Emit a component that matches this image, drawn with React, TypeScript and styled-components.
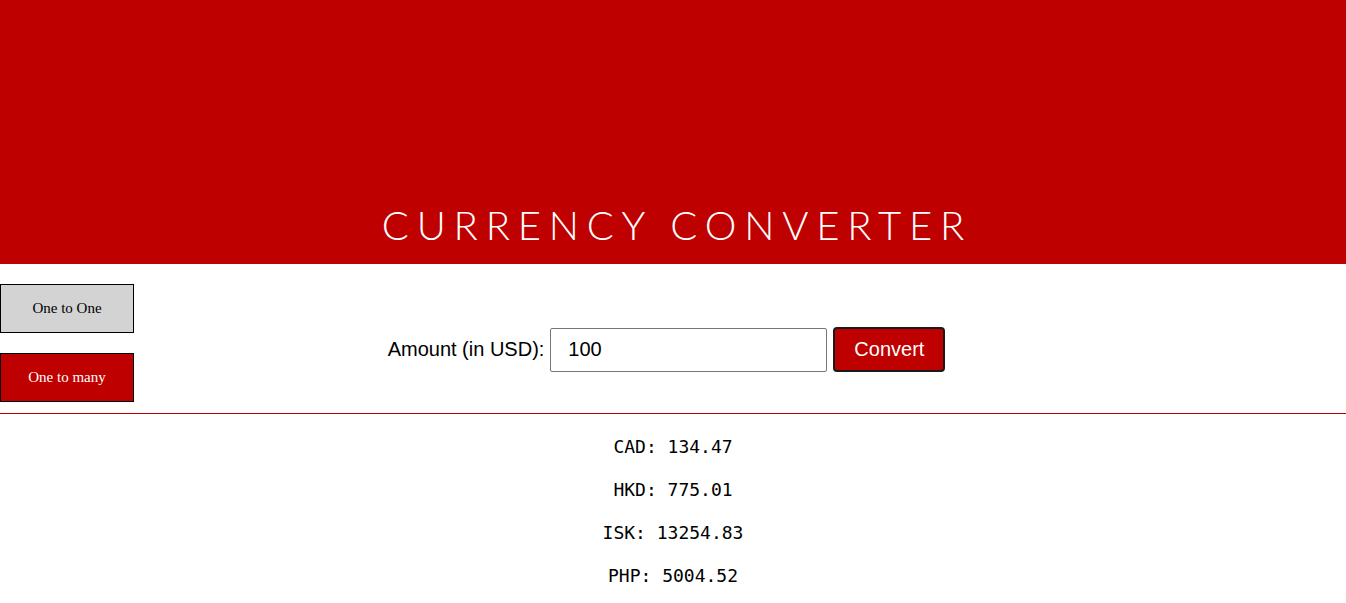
import React from "react";
import styled, { createGlobalStyle } from "styled-components";

const rates = [
  { code: "CAD", value: "134.47" },
  { code: "HKD", value: "775.01" },
  { code: "ISK", value: "13254.83" },
  { code: "PHP", value: "5004.52" },
];

export default function App() {
  return (
    <>
      <GlobalStyle />
      <Header>
        <Title>CURRENCY CONVERTER</Title>
      </Header>
      <Main>
        <Sidebar>
          <ModeButton>One to One</ModeButton>
          <ModeButton $active>One to many</ModeButton>
        </Sidebar>
        <Form>
          <Label htmlFor="amount">Amount (in USD):</Label>
          <AmountInput id="amount" defaultValue="100" />
          <ConvertButton>Convert</ConvertButton>
        </Form>
      </Main>
      <Divider />
      <Results>
        {rates.map((r) => (
          <Rate key={r.code}>
            {r.code}: {r.value}
          </Rate>
        ))}
      </Results>
    </>
  );
}

const GlobalStyle = createGlobalStyle`
  body {
    margin: 0;
    background: #fff;
    font-family: "Liberation Serif", serif;
  }
`;

const Header = styled.header`
  background-color: #bf0000;
  height: 264px;
  display: flex;
  align-items: flex-end;
  justify-content: center;
  box-sizing: border-box;
  padding-bottom: 19px;
`;

const Title = styled.h1`
  margin: 0 -8px 0 0;
  color: #fff;
  font-family: "Lato", "Open Sans", sans-serif;
  font-weight: 300;
  font-size: 40px;
  letter-spacing: 7.8px;
  line-height: 1;
`;

const Main = styled.div`
  display: flex;
  height: 149px;
`;

const Divider = styled.div`
  height: 1px;
  background: #c00000;
`;

const Sidebar = styled.div`
  display: flex;
  flex-direction: column;
  gap: 20px;
  padding-top: 20px;
  width: 134px;
`;

const ModeButton = styled.button<{ $active?: boolean }>`
  width: 134px;
  height: 49px;
  border: 1px solid #000;
  background: ${(p) => (p.$active ? "#bf0000" : "#d3d3d3")};
  color: ${(p) => (p.$active ? "#fff" : "#000")};
  font-family: "Liberation Serif", serif;
  font-size: 15px;
  padding: 0;
  cursor: pointer;
`;

const Form = styled.div`
  flex: 1;
  display: flex;
  align-items: center;
  justify-content: center;
  padding-right: 147px;
  padding-top: 22px;
  font-family: "Liberation Sans", Arial, sans-serif;
`;

const Label = styled.label`
  font-size: 20px;
  color: #000;
  margin-right: 6px;
`;

const AmountInput = styled.input`
  width: 277px;
  height: 44px;
  box-sizing: border-box;
  border: 1px solid #767676;
  border-radius: 2px;
  padding: 0 17px;
  font-family: "Liberation Sans", Arial, sans-serif;
  font-size: 20px;
  color: #000;
  margin-right: 6px;
`;

const ConvertButton = styled.button`
  width: 112px;
  height: 45px;
  box-sizing: border-box;
  background: #bf0000;
  color: #fff;
  border: 2px solid #1a1a1a;
  border-radius: 4px;
  font-family: "Liberation Sans", Arial, sans-serif;
  font-size: 20px;
  cursor: pointer;
`;

const Results = styled.div`
  display: flex;
  flex-direction: column;
  align-items: center;
  gap: 22px;
  padding-top: 22px;
`;

const Rate = styled.div`
  font-family: "DejaVu Sans Mono", "Liberation Mono", monospace;
  font-size: 18px;
  line-height: 21px;
  color: #000;
`;
